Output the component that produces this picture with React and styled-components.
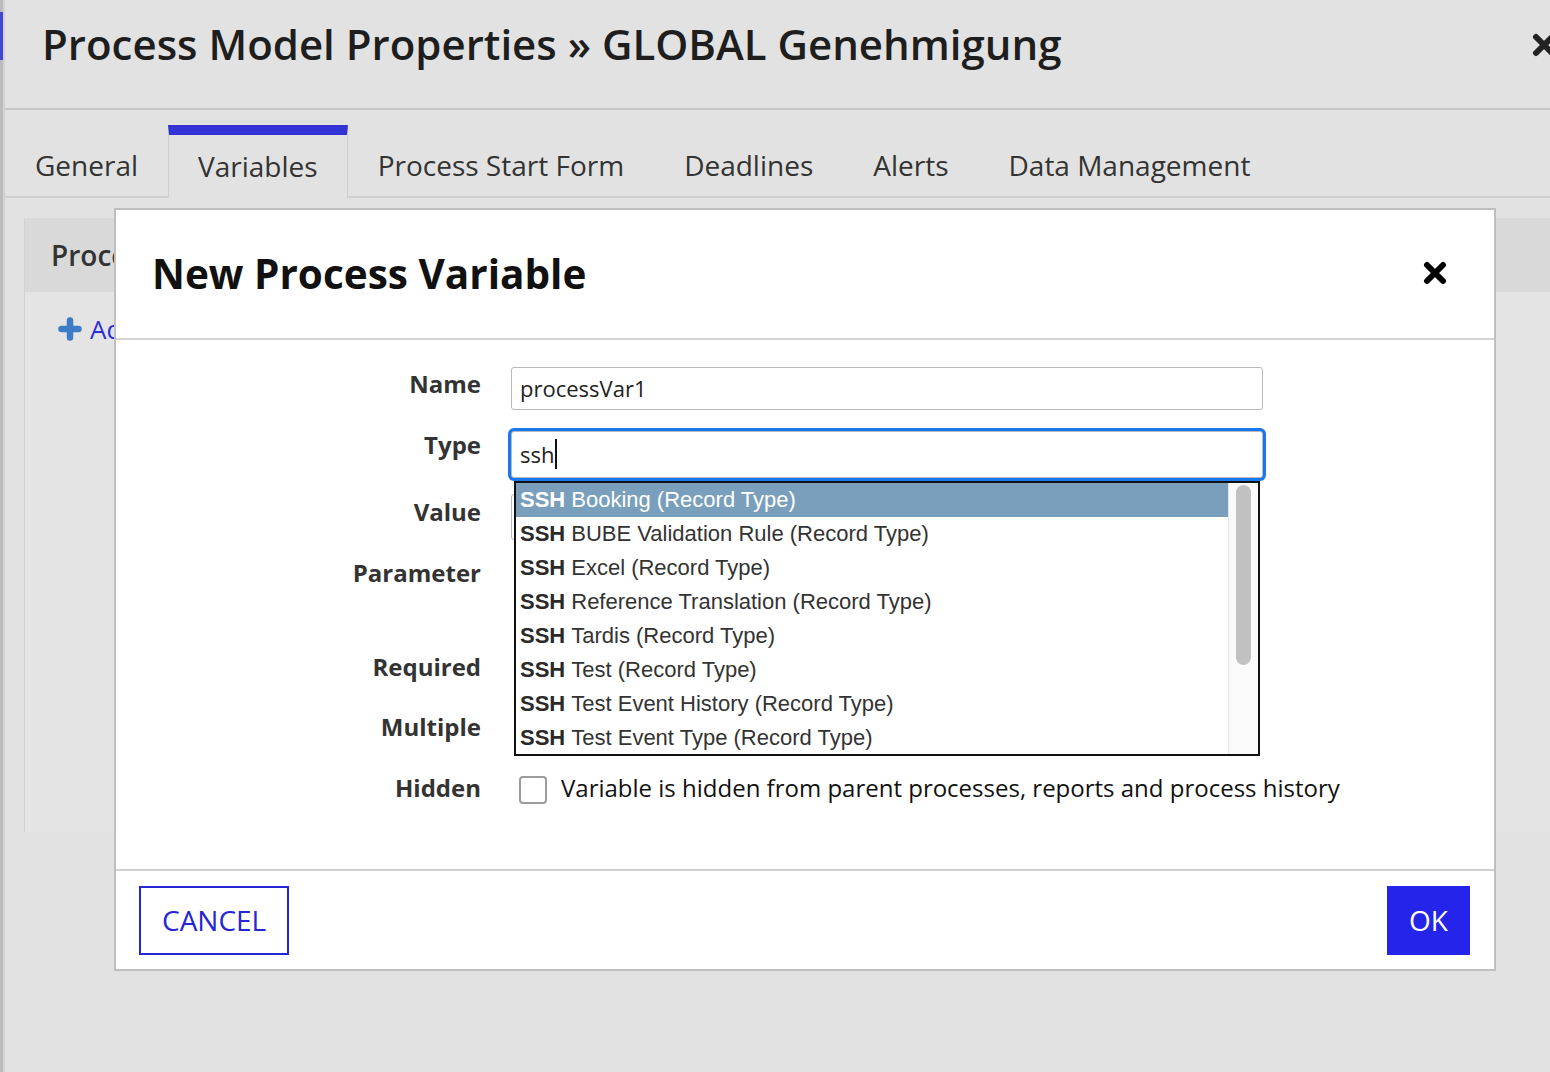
import React from 'react';
import styled, { createGlobalStyle } from 'styled-components';

const GlobalStyle = createGlobalStyle`
  html, body {
    margin: 0;
    padding: 0;
    background: #e2e2e2;
    font-family: "Open Sans", "DejaVu Sans", sans-serif;
  }
  * { box-sizing: border-box; }
`;

const Page = styled.div`
  position: relative;
  display: flex;
  width: 1550px;
  height: 1072px;
  overflow: hidden;
  background: #e2e2e2;
`;

const SideStrip = styled.div`
  width: 5px;
  flex-shrink: 0;
  background: #bcbcbc;
  border-right: 2px solid #d2d2d2;
  padding-top: 12px;
`;

const Marker = styled.div`
  width: 3px;
  height: 48px;
  background: #4545d6;
`;

const Main = styled.div`
  flex: 1;
  display: flex;
  flex-direction: column;
  min-width: 0;
`;

const Header = styled.div`
  height: 110px;
  display: flex;
  align-items: flex-start;
  padding: 12px 0 0 37px;
  border-bottom: 2px solid #c6c6c6;
`;

const Title = styled.h1`
  margin: 0;
  font-size: 42px;
  line-height: 64px;
  font-weight: 600;
  color: #1e1e1e;
  white-space: nowrap;
`;

const HeaderClose = styled.div`
  margin-left: auto;
  margin-right: -6px;
  padding-top: 21px;
  display: flex;
  color: #222;
`;

const Cross = ({ size = 24 }) => (
  <svg width={size} height={size} viewBox="0 0 24 24">
    <path d="M4 4L20 20M20 4L4 20" stroke="currentColor" strokeWidth="6" strokeLinecap="round" fill="none" />
  </svg>
);

const PlusIcon = () => (
  <svg width="24" height="24" viewBox="0 0 24 24">
    <path d="M12 3.5V20.5M3.5 12H20.5" stroke="currentColor" strokeWidth="6.5" strokeLinecap="round" fill="none" />
  </svg>
);

const Tabs = styled.div`
  display: flex;
  align-items: flex-end;
  height: 88px;
  padding-top: 14px;
  border-bottom: 2px solid #d0d0d0;
`;

const Tab = styled.div`
  height: 73px;
  padding: 0 29px;
  display: flex;
  align-items: center;
  font-size: 28px;
  color: #333;
  white-space: nowrap;
  border-top: 10px solid ${p => (p.$active ? '#3434d6' : 'transparent')};
  border-left: 1px solid ${p => (p.$active ? '#d0d0d0' : 'transparent')};
  border-right: 1px solid ${p => (p.$active ? '#d0d0d0' : 'transparent')};
  margin-bottom: ${p => (p.$active ? '-2px' : '0')};
  padding-bottom: ${p => (p.$active ? '2px' : '0')};
  background: #e2e2e2;
`;

const Content = styled.div`
  padding: 20px 0 0 19px;
`;

const Panel = styled.div`
  border-left: 1px solid #d2d2d2;
`;

const PanelHeader = styled.div`
  height: 74px;
  display: flex;
  align-items: center;
  padding-left: 26px;
  background: #d9d9d9;
  font-size: 28px;
  font-weight: 600;
  color: #333;
  white-space: nowrap;
`;

const PanelBody = styled.div`
  height: 540px;
  background: #e4e4e4;
  padding: 19px 0 0 33px;
`;

const AddLink = styled.div`
  display: flex;
  align-items: center;
  gap: 8px;
  font-size: 26px;
  color: #2d2dd8;
  white-space: nowrap;
  svg {
    color: #3b7cc4;
  }
`;

const Dialog = styled.div`
  position: absolute;
  left: 114px;
  top: 208px;
  width: 1382px;
  height: 763px;
  background: #fff;
  border: 2px solid #bfbfbf;
  display: flex;
  flex-direction: column;
`;

const DialogHeader = styled.div`
  height: 130px;
  flex-shrink: 0;
  display: flex;
  align-items: center;
  justify-content: space-between;
  padding: 0 47px 2px 36px;
  border-bottom: 2px solid #d4d4d4;
`;

const DialogTitle = styled.h2`
  margin: 0;
  font-size: 40.5px;
  font-weight: 700;
  color: #111;
`;

const CloseButton = styled.div`
  display: flex;
  color: #000;
`;

const DialogBody = styled.div`
  flex: 1;
  padding-top: 27px;
`;

const Form = styled.div`
  display: grid;
  grid-template-columns: 365px 752px;
  grid-template-rows: 61px 67px 61px 94px 60px 61px 34px;
  column-gap: 30px;
`;

const Label = styled.div`
  text-align: right;
  font-size: 24px;
  line-height: 34px;
  font-weight: 700;
  color: #333;
`;

const Field = styled.div`
  position: relative;
  z-index: ${p => (p.$top ? 2 : 1)};
`;

const TextBox = styled.div`
  height: ${p => p.$h || 43}px;
  width: ${p => p.$w || '100%'};
  margin-top: ${p => p.$mt || 0}px;
  border: 1px solid #b9b9b9;
  border-radius: 3px;
  padding: 0 0 2px 8px;
  display: flex;
  align-items: center;
  font-size: 22px;
  color: #222;
  background: #fff;
  box-shadow: ${p => (p.$focus ? '0 0 0 3px #1a78ee' : 'none')};
`;

const Caret = styled.span`
  display: inline-block;
  width: 2px;
  height: 30px;
  background: #111;
  margin-left: 1px;
`;

const Dropdown = styled.div`
  position: absolute;
  top: 53px;
  left: 3px;
  width: 746px;
  height: 275px;
  border: 2px solid #111;
  background: #fff;
  display: flex;
  overflow: hidden;
`;

const Options = styled.div`
  flex: 1;
`;

const Option = styled.div`
  height: 34px;
  display: flex;
  align-items: center;
  padding-left: 4px;
  font-family: "Liberation Sans", Arial, sans-serif;
  font-size: 22px;
  white-space: nowrap;
  color: ${p => (p.$active ? '#fff' : '#333')};
  background: ${p => (p.$active ? '#7a9fbc' : 'transparent')};
  b {
    font-weight: 700;
    margin-right: 6px;
    color: ${p => (p.$active ? '#fff' : '#2a2a2a')};
  }
`;

const Track = styled.div`
  width: 30px;
  flex-shrink: 0;
  background: #fafafa;
  border-left: 1px solid #e4e4e4;
  padding: 2px 0 0 7px;
`;

const Thumb = styled.div`
  width: 15px;
  height: 180px;
  border-radius: 8px;
  background: #c1c1c1;
`;

const CheckRow = styled.div`
  display: flex;
  align-items: center;
  gap: 14px;
  padding: 5px 0 0 8px;
  font-size: 24px;
  line-height: 30px;
  color: #111;
  white-space: nowrap;
`;

const CheckText = styled.span`
  margin-top: -4px;
`;

const Box = styled.span`
  width: 28px;
  height: 28px;
  flex-shrink: 0;
  border: 2px solid #9c9c9c;
  border-radius: 4px;
  background: #fff;
`;

const DialogFooter = styled.div`
  height: 100px;
  flex-shrink: 0;
  display: flex;
  align-items: center;
  justify-content: space-between;
  padding: 0 24px 0 23px;
  border-top: 2px solid #d0d0d0;
`;

const Button = styled.button`
  height: 69px;
  padding: 0 ${p => (p.$primary ? 20 : 21)}px;
  font-family: "Open Sans", sans-serif;
  font-size: 28px;
  border: 2px solid ${p => (p.$primary ? '#2424ea' : '#2626d4')};
  color: ${p => (p.$primary ? '#fff' : '#2626d4')};
  background: ${p => (p.$primary ? '#2424ea' : '#fff')};
  cursor: pointer;
`;

const tabs = ['General', 'Variables', 'Process Start Form', 'Deadlines', 'Alerts', 'Data Management'];

const options = [
  'Booking (Record Type)',
  'BUBE Validation Rule (Record Type)',
  'Excel (Record Type)',
  'Reference Translation (Record Type)',
  'Tardis (Record Type)',
  'Test (Record Type)',
  'Test Event History (Record Type)',
  'Test Event Type (Record Type)',
];

export default function App() {
  return (
    <Page>
      <GlobalStyle />
      <SideStrip><Marker /></SideStrip>
      <Main>
        <Header>
          <Title>Process Model Properties » GLOBAL Genehmigung</Title>
          <HeaderClose><Cross /></HeaderClose>
        </Header>
        <Tabs>
          {tabs.map(t => (
            <Tab key={t} $active={t === 'Variables'}>{t}</Tab>
          ))}
        </Tabs>
        <Content>
          <Panel>
            <PanelHeader>Process Variables</PanelHeader>
            <PanelBody>
              <AddLink><PlusIcon /> Add Variable</AddLink>
            </PanelBody>
          </Panel>
        </Content>
      </Main>

      <Dialog>
        <DialogHeader>
          <DialogTitle>New Process Variable</DialogTitle>
          <CloseButton><Cross /></CloseButton>
        </DialogHeader>
        <DialogBody>
          <Form>
            <Label>Name</Label>
            <Field><TextBox>processVar1</TextBox></Field>

            <Label>Type</Label>
            <Field $top>
              <TextBox $focus $h={47} $mt={3}>ssh<Caret /></TextBox>
              <Dropdown>
                <Options>
                  {options.map((o, i) => (
                    <Option key={o} $active={i === 0}><b>SSH</b>{o}</Option>
                  ))}
                </Options>
                <Track><Thumb /></Track>
              </Dropdown>
            </Field>

            <Label>Value</Label>
            <Field><TextBox $h={46} $mt={-1} $w="700px" /></Field>

            <Label>Parameter</Label>
            <Field><CheckRow><Box /></CheckRow></Field>

            <Label>Required</Label>
            <Field><CheckRow><Box /></CheckRow></Field>

            <Label>Multiple</Label>
            <Field><CheckRow><Box /></CheckRow></Field>

            <Label>Hidden</Label>
            <Field>
              <CheckRow>
                <Box />
                <CheckText>Variable is hidden from parent processes, reports and process history</CheckText>
              </CheckRow>
            </Field>
          </Form>
        </DialogBody>
        <DialogFooter>
          <Button>CANCEL</Button>
          <Button $primary>OK</Button>
        </DialogFooter>
      </Dialog>
    </Page>
  );
}
